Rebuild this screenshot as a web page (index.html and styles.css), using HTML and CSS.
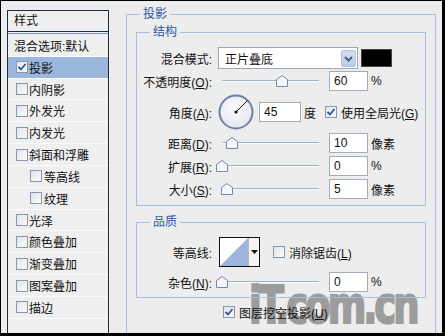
FILE: index.html
```html
<!DOCTYPE html>
<html>
<head>
<meta charset="utf-8">
<link rel="stylesheet" href="styles.css">
</head>
<body>
<div class="frame">
  <div class="wm">iT.com.cn</div>
  <div class="panel">
    <div class="phead">样式</div>
    <div class="plist">
      <div class="prow">混合选项:默认</div>
      <div class="prow sel"><span class="cb"><svg width="10" height="10" viewBox="0 0 10 10"><polyline points="1.5,5 4,7.5 8.5,2" fill="none" stroke="#2b55a3" stroke-width="1.8"/></svg></span>投影</div>
      <div class="prow"><span class="cb"></span>内阴影</div>
      <div class="prow"><span class="cb"></span>外发光</div>
      <div class="prow"><span class="cb"></span>内发光</div>
      <div class="prow"><span class="cb"></span>斜面和浮雕</div>
      <div class="prow sub"><span class="cb"></span>等高线</div>
      <div class="prow sub"><span class="cb"></span>纹理</div>
      <div class="prow"><span class="cb"></span>光泽</div>
      <div class="prow"><span class="cb"></span>颜色叠加</div>
      <div class="prow"><span class="cb"></span>渐变叠加</div>
      <div class="prow"><span class="cb"></span>图案叠加</div>
      <div class="prow"><span class="cb"></span>描边</div>
    </div>
  </div>
  <div class="main">
    <fieldset class="grp outer">
      <legend>投影</legend>
      <fieldset class="grp inner">
        <legend>结构</legend>
        <div class="row r-mode">
          <span class="lbl">混合模式:</span>
          <div class="select"><span>正片叠底</span><span class="dd"><svg width="13" height="15" viewBox="0 0 13 15"><polyline points="3,6 6.5,9.5 10,6" fill="none" stroke="#4a5f86" stroke-width="2"/></svg></span></div>
          <span class="swatch"></span>
        </div>
        <div class="row r-op">
          <span class="lbl">不透明度(<u>O</u>):</span>
          <div class="slider"><span class="track"></span><span class="thumb" style="left:64px"><svg width="12" height="12" viewBox="0 0 12 12"><polygon points="0.5,4.5 6,0.5 11.5,4.5 11.5,11.5 0.5,11.5" fill="#f5f7fb" stroke="#7688aa"/></svg></span></div>
          <span class="inp">60</span><span class="unit">%</span>
        </div>
        <div class="row r-ang">
          <span class="lbl">角度(<u>A</u>):</span>
          <svg class="dial" width="36" height="36" viewBox="0 0 36 36"><defs><radialGradient id="g" cx="0.45" cy="0.4" r="0.6"><stop offset="0" stop-color="#fbfbfd"/><stop offset="1" stop-color="#e4e7ef"/></radialGradient></defs><circle cx="18" cy="18" r="16.5" fill="url(#g)" stroke="#6d80a6" stroke-width="2"/><line x1="18" y1="18" x2="29.5" y2="6.5" stroke="#111" stroke-width="1"/><circle cx="18" cy="18" r="1.6" fill="#111"/></svg>
          <span class="inp wide">45</span><span class="deg">度</span>
          <span class="cb gl"><svg width="10" height="10" viewBox="0 0 10 10"><polyline points="1.5,5 4,7.5 8.5,2" fill="none" stroke="#2b55a3" stroke-width="1.8"/></svg></span><span class="cbt">使用全局光(<u>G</u>)</span>
        </div>
        <div class="row">
          <span class="lbl">距离(<u>D</u>):</span>
          <div class="slider"><span class="track"></span><span class="thumb" style="left:14px"><svg width="12" height="12" viewBox="0 0 12 12"><polygon points="0.5,4.5 6,0.5 11.5,4.5 11.5,11.5 0.5,11.5" fill="#f5f7fb" stroke="#7688aa"/></svg></span></div>
          <span class="inp">10</span><span class="unit">像素</span>
        </div>
        <div class="row">
          <span class="lbl">扩展(<u>R</u>):</span>
          <div class="slider"><span class="track"></span><span class="thumb" style="left:4px"><svg width="12" height="12" viewBox="0 0 12 12"><polygon points="0.5,4.5 6,0.5 11.5,4.5 11.5,11.5 0.5,11.5" fill="#f5f7fb" stroke="#7688aa"/></svg></span></div>
          <span class="inp">0</span><span class="unit">%</span>
        </div>
        <div class="row">
          <span class="lbl">大小(<u>S</u>):</span>
          <div class="slider"><span class="track"></span><span class="thumb" style="left:9px"><svg width="12" height="12" viewBox="0 0 12 12"><polygon points="0.5,4.5 6,0.5 11.5,4.5 11.5,11.5 0.5,11.5" fill="#f5f7fb" stroke="#7688aa"/></svg></span></div>
          <span class="inp">5</span><span class="unit">像素</span>
        </div>
      </fieldset>
      <fieldset class="grp inner quality">
        <legend>品质</legend>
        <div class="row r-contour">
          <span class="lbl">等高线:</span>
          <div class="contour"><span class="prev"><svg width="28" height="28" viewBox="0 0 28 28"><polygon points="0,28 28,0 28,28" fill="#9db5dd"/></svg></span><span class="cdd"><svg width="7" height="4" viewBox="0 0 7 4"><polygon points="0,0 7,0 3.5,4" fill="#111"/></svg></span></div>
          <span class="cb aa"></span><span class="cbt">消除锯齿(<u>L</u>)</span>
        </div>
        <div class="row r-noise">
          <span class="lbl">杂色(<u>N</u>):</span>
          <div class="slider"><span class="track"></span><span class="thumb" style="left:4px"><svg width="12" height="12" viewBox="0 0 12 12"><polygon points="0.5,4.5 6,0.5 11.5,4.5 11.5,11.5 0.5,11.5" fill="#f5f7fb" stroke="#7688aa"/></svg></span></div>
          <span class="inp">0</span><span class="unit">%</span>
        </div>
      </fieldset>
      <div class="knock"><span class="cb"><svg width="10" height="10" viewBox="0 0 10 10"><polyline points="1.5,5 4,7.5 8.5,2" fill="none" stroke="#2b55a3" stroke-width="1.8"/></svg></span><span class="cbt">图层挖空投影(<u>U</u>)</span></div>
    </fieldset>
  </div>
</div>
</body>
</html>
```
FILE: styles.css
```css
* { box-sizing: border-box; }
html, body { margin: 0; padding: 0; }
body {
  width: 445px;
  height: 336px;
  overflow: hidden;
  background: #000;
  font: 12px "Liberation Sans", "Noto Sans CJK SC", sans-serif;
  color: #111;
}
.frame {
  position: relative;
  width: 445px;
  height: 336px;
  border-style: solid;
  border-color: #000;
  border-width: 1px 3px 3px 1px;
  background: #ededed;
  display: flex;
  align-items: flex-start;
  overflow: hidden;
}
.wm {
  position: absolute;
  left: 248px;
  top: 294px;
  z-index: 0;
  font: bold 37px/38px "DejaVu Sans", sans-serif;
  letter-spacing: -3px;
  color: #9c9c9c;
  -webkit-text-stroke: 1.5px #9c9c9c;
  transform: scaleY(1.4);
  transform-origin: left bottom;
  white-space: nowrap;
}
.panel {
  position: relative;
  z-index: 1;
  flex: none;
  width: 102px;
  height: 340px;
  margin: 9px 0 0 6px;
  border: 1px solid #1f2b45;
  background: #efefef;
}
.phead {
  height: 21px;
  line-height: 20px;
  padding-left: 6px;
  border-bottom: 1px solid #1f2b45;
}
.plist {
  margin-top: 1px;
  border-top: 1px solid #7d95c2;
  padding-top: 1px;
}
.prow {
  display: flex;
  align-items: center;
  height: 21.83px;
  padding-left: 6px;
  border-bottom: 1px solid #fafafa;
  white-space: nowrap;
}
.prow .cb { margin: 0 1px 0 2px; }
.prow.sub { padding-left: 20px; }
.prow.sub .cb { margin-right: 2px; }
.prow.sel { background: #9cb7dd; }
.cb {
  flex: none;
  width: 12px;
  height: 12px;
  border: 1px solid #8797b2;
  background: linear-gradient(135deg, #e2e4e8, #fbfbfb);
  display: inline-flex;
  align-items: center;
  justify-content: center;
}
.main {
  position: relative;
  z-index: 1;
  flex: none;
  margin: 6px 0 0 17px;
}
.grp {
  margin: 0;
  min-width: 0;
  border: 1px solid #a7bde0;
  background: transparent;
}
.grp legend {
  height: 15px;
  line-height: 15px;
  padding: 0 3px;
  color: #2d57a8;
}
.outer {
  width: 310px;
  height: 340px;
  padding: 3px 9px 0 9px;
}
.outer > legend { margin-left: 4px; }
.inner {
  width: 290px;
  padding: 7px 0 6px 0;
}
.inner > legend { margin-left: 13px; }
.quality {
  margin-top: 9px;
  padding-bottom: 5px;
}
.row {
  display: flex;
  align-items: center;
  height: 20px;
  margin-top: 3px;
  white-space: nowrap;
}
.r-mode { height: 22px; margin-top: 0; }
.r-op { margin-top: 2px; }
.r-ang { height: 36px; }
.r-contour { height: 30px; margin-top: 0; }
.r-noise { margin-top: 5px; }
.lbl {
  flex: none;
  width: 75px;
  margin-right: 6px;
  text-align: right;
}
.select {
  flex: none;
  width: 140px;
  height: 22px;
  border: 1px solid #9ea7b4;
  background: #fff;
  display: flex;
  align-items: center;
  justify-content: space-between;
  padding: 0 1px 0 6px;
}
.dd {
  width: 15px;
  height: 17px;
  background: linear-gradient(#d3ddef, #bccbe4);
  border: 1px solid #b3c2dc;
  border-radius: 2px;
  display: flex;
  align-items: center;
  justify-content: center;
}
.swatch {
  flex: none;
  width: 31px;
  height: 18px;
  margin-left: 3px;
  background: #000;
  border: 1px solid #444;
}
.slider {
  position: relative;
  flex: none;
  width: 104px;
  height: 20px;
  display: flex;
  align-items: center;
}
.track {
  margin-left: 4px;
  width: 97px;
  height: 2px;
  border-top: 1px solid #9eaec4;
  border-bottom: 1px solid #fdfdfd;
}
.thumb {
  position: absolute;
  top: 4px;
  width: 12px;
  height: 12px;
  margin-left: -6px;
  display: block;
  line-height: 0;
}
.inp {
  flex: none;
  width: 39px;
  height: 20px;
  margin-left: 7px;
  padding-left: 4px;
  line-height: 18px;
  border: 1px solid #a3acb9;
  background: #fff;
}
.inp.wide { width: 42px; margin-left: 5px; }
.unit { margin-left: 3px; }
.dial { flex: none; }
.deg { margin-left: 3px; }
.cb.gl { margin-left: 9px; }
.cbt { margin-left: 4px; }
.contour {
  flex: none;
  width: 41px;
  height: 30px;
  margin-left: 1px;
  border: 1px solid #111;
  background: #fff;
  display: flex;
}
.prev { width: 29px; height: 28px; line-height: 0; border-right: 1px solid #bbb; }
.cdd {
  flex: 1;
  display: flex;
  align-items: center;
  justify-content: center;
  background: #f4f4f4;
}
.cb.aa { margin-left: 13px; }
.knock {
  display: flex;
  align-items: center;
  height: 14px;
  margin: 7px 0 0 87px;
  white-space: nowrap;
}
```
